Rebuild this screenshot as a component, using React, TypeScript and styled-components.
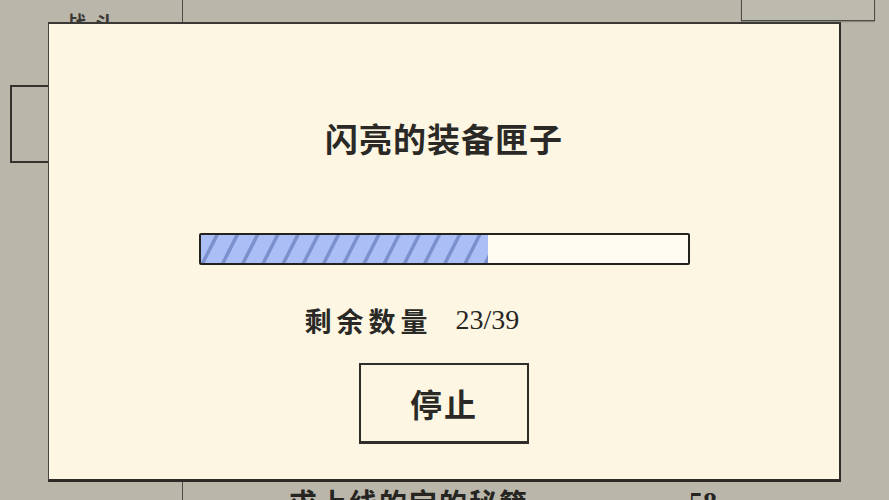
import styled, { createGlobalStyle } from 'styled-components';

const remaining = 23;
const total = 39;

const App = () => {
  const percent = (remaining / total) * 100;

  return (
    <>
      <GlobalStyle />
      <Screen>
        <Sidebar>
          <SideTitle>战斗</SideTitle>
          <SideTab />
        </Sidebar>
        <Main>
          <TopBar>
            <Slot />
          </TopBar>
          <BottomRow>
            <RowName>求上线的宝的秘籍</RowName>
            <RowValue>58</RowValue>
          </BottomRow>
        </Main>

        <Dialog>
          <Title>闪亮的装备匣子</Title>
          <Bar>
            <BarFill style={{ width: `${percent}%` }} />
          </Bar>
          <Counter>
            <CounterLabel>剩余数量</CounterLabel>
            <CounterValue>
              {remaining}/{total}
            </CounterValue>
          </Counter>
          <StopButton>停止</StopButton>
        </Dialog>
      </Screen>
    </>
  );
};

const GlobalStyle = createGlobalStyle`
  * {
    box-sizing: border-box;
  }
  body {
    margin: 0;
    background-color: #bab7aa;
    font-family: 'Noto Sans CJK SC', 'Noto Sans', sans-serif;
    color: #262522;
  }
`;

const Screen = styled.div`
  position: relative;
  width: 889px;
  height: 500px;
  overflow: hidden;
  display: grid;
  grid-template-columns: 183px 1fr;
  background-color: #bab7aa;
`;

const Sidebar = styled.div`
  display: flex;
  flex-direction: column;
  padding-left: 10px;
  border-right: 1.5px solid #4c4b46;
`;

const SideTitle = styled.div`
  height: 22px;
  padding-left: 56px;
  font-size: 20px;
  line-height: 22px;
  letter-spacing: 8px;
  font-weight: 700;
  color: #3a3935;
  margin-top: 12px;
`;

const SideTab = styled.div`
  margin-top: 51px;
  width: 60px;
  height: 78px;
  border: 2px solid #33322e;
  border-right: none;
`;

const Main = styled.div`
  display: flex;
  flex-direction: column;
  justify-content: space-between;
`;

const TopBar = styled.div`
  display: flex;
  justify-content: flex-end;
  padding-right: 14px;
`;

const Slot = styled.div`
  width: 134px;
  height: 21px;
  background-color: #bdbaae;
  border: 1.5px solid #4c4b46;
  border-top: none;
  box-shadow: 0 1px 1px rgba(0, 0, 0, 0.25);
`;

const BottomRow = styled.div`
  display: flex;
  align-items: flex-start;
  height: 12px;
  padding-left: 106px;
  font-size: 28px;
  line-height: 28px;
  font-weight: 700;
`;

const RowName = styled.span`
  letter-spacing: 2px;
`;

const RowValue = styled.span`
  margin-left: 160px;
  font-family: 'Liberation Serif', serif;
`;

const Dialog = styled.div`
  position: absolute;
  left: 48px;
  top: 22px;
  width: 793px;
  height: 460px;
  display: flex;
  flex-direction: column;
  align-items: center;
  padding-top: 94px;
  background-color: #fdf6e3;
  border-top: 2px solid #3a3935;
  border-left: 1.5px solid #45443f;
  border-right: 2.5px solid #2f2e2a;
  border-bottom: 3px solid #2b2a26;
`;

const Title = styled.div`
  font-size: 33px;
  line-height: 40px;
  font-weight: 700;
  letter-spacing: 1px;
  color: #2a2926;
`;

const Bar = styled.div`
  margin-top: 75px;
  width: 491px;
  height: 32px;
  background-color: #fffcf2;
  border: 2.5px solid #23221f;
  border-radius: 2px;
  overflow: hidden;
`;

const BarFill = styled.div`
  height: 100%;
  background-color: #abbff6;
  background-image: repeating-linear-gradient(
    117deg,
    #abbff6 0px,
    #abbff6 12px,
    #7b90cc 13px,
    #7b90cc 15.5px,
    #abbff6 16.5px,
    #abbff6 18px
  );
`;

const Counter = styled.div`
  margin-top: 37px;
  width: 491px;
  display: flex;
  align-items: center;
  padding-left: 106px;
  height: 36px;
`;

const CounterLabel = styled.span`
  font-size: 27px;
  font-weight: 700;
  letter-spacing: 5px;
  color: #2a2926;
`;

const CounterValue = styled.span`
  margin-left: 23px;
  font-family: 'Liberation Serif', serif;
  font-size: 28px;
`;

const StopButton = styled.button`
  margin-top: 25px;
  width: 170px;
  height: 81px;
  display: flex;
  justify-content: center;
  align-items: center;
  background-color: #fdf6e3;
  border: 2px solid #2f2e2a;
  border-bottom-width: 3px;
  font-family: 'Noto Sans CJK SC', 'Noto Sans', sans-serif;
  font-size: 32px;
  font-weight: 700;
  letter-spacing: 2px;
  color: #2a2926;
  padding: 0;
`;

export default App;
